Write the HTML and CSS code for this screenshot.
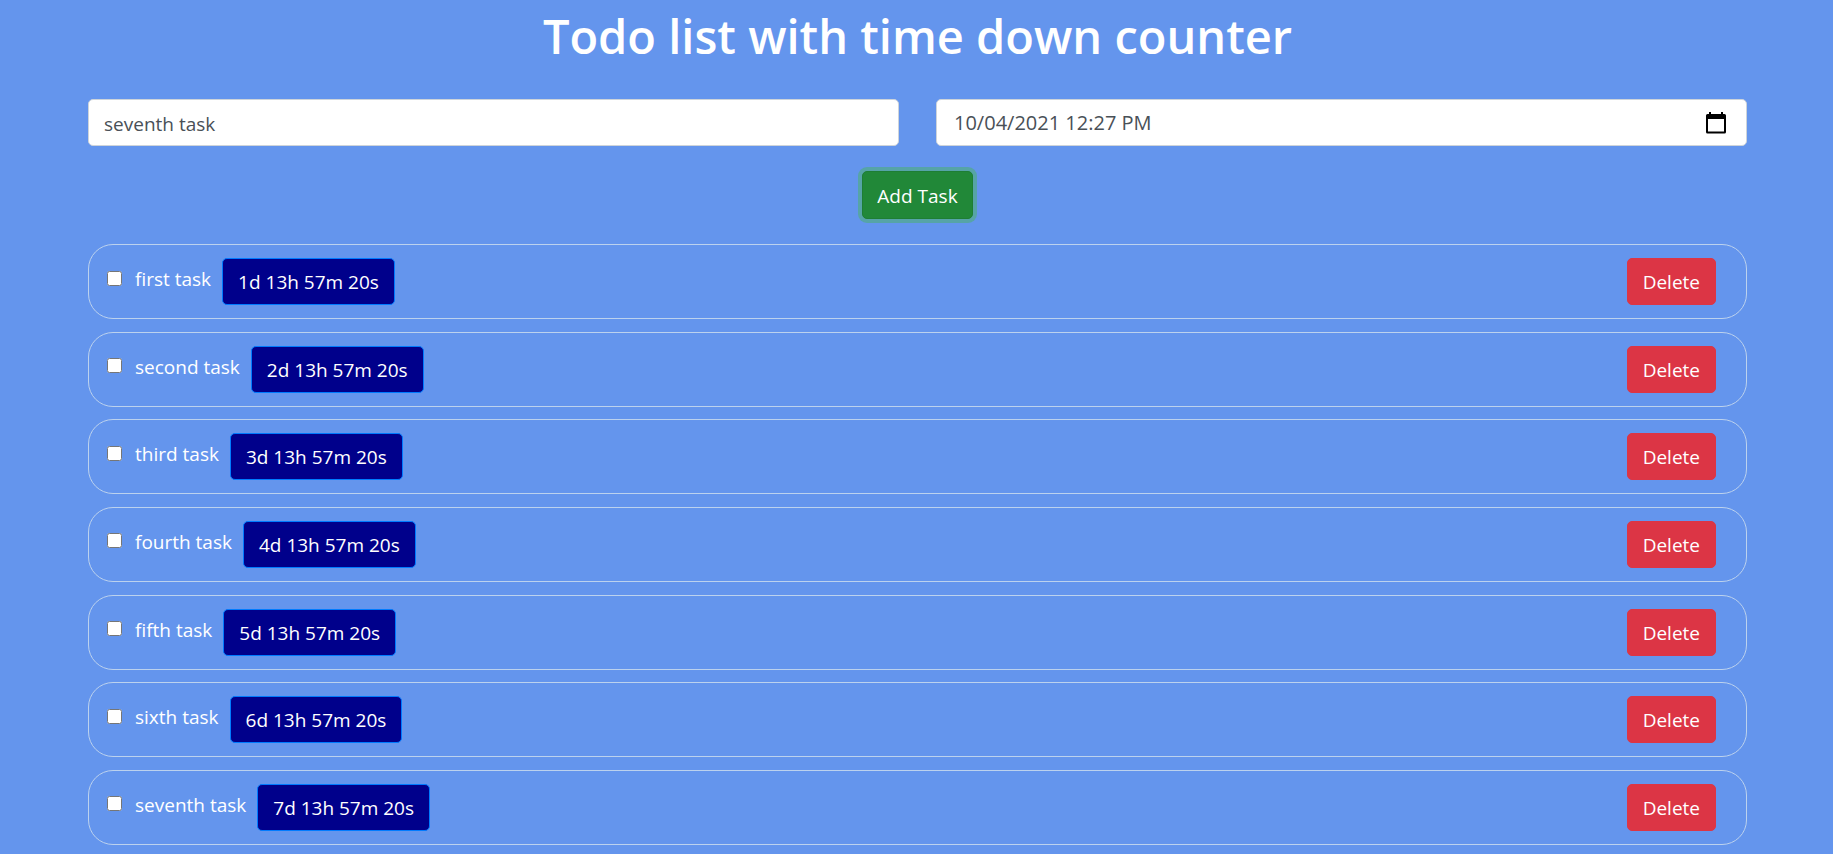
FILE: index.html
```html
<!DOCTYPE html>
<html lang="en">
<head>
<meta charset="utf-8">
<title>Todo list with time down counter</title>
<link rel="stylesheet" href="styles.css">
</head>
<body>
<main class="page">
  <h1 class="title">Todo list with time down counter</h1>
  <form class="task-form">
    <div class="fields">
      <input class="field" type="text" aria-label="Task" value="seventh task">
      <div class="field date-field">
        <input class="date-input" type="text" aria-label="Deadline" value="10/04/2021 12:27 PM">
        <button class="picker" type="button" aria-label="Open calendar">
          <svg width="20" height="22" viewBox="0 0 20 22" aria-hidden="true"><path fill-rule="evenodd" d="M3 0h2v2h10V0h2v2h1.500q1.500 0 1.500 1.500v16.500q0 1.500-1.500 1.500h-17q-1.500 0-1.500-1.500V3.500Q0 2 1.500 2H3zM2 7v12.500h16V7z"/></svg>
        </button>
      </div>
    </div>
    <button class="btn btn-add" type="button">Add Task</button>
  </form>
  <ul class="tasks">
    <li class="task"><label class="check"><input class="box" type="checkbox"><span>first task</span></label><button class="btn btn-time" type="button">1d 13h 57m 20s</button><button class="btn btn-delete" type="button">Delete</button></li>
    <li class="task"><label class="check"><input class="box" type="checkbox"><span>second task</span></label><button class="btn btn-time" type="button">2d 13h 57m 20s</button><button class="btn btn-delete" type="button">Delete</button></li>
    <li class="task"><label class="check"><input class="box" type="checkbox"><span>third task</span></label><button class="btn btn-time" type="button">3d 13h 57m 20s</button><button class="btn btn-delete" type="button">Delete</button></li>
    <li class="task"><label class="check"><input class="box" type="checkbox"><span>fourth task</span></label><button class="btn btn-time" type="button">4d 13h 57m 20s</button><button class="btn btn-delete" type="button">Delete</button></li>
    <li class="task"><label class="check"><input class="box" type="checkbox"><span>fifth task</span></label><button class="btn btn-time" type="button">5d 13h 57m 20s</button><button class="btn btn-delete" type="button">Delete</button></li>
    <li class="task"><label class="check"><input class="box" type="checkbox"><span>sixth task</span></label><button class="btn btn-time" type="button">6d 13h 57m 20s</button><button class="btn btn-delete" type="button">Delete</button></li>
    <li class="task"><label class="check"><input class="box" type="checkbox"><span>seventh task</span></label><button class="btn btn-time" type="button">7d 13h 57m 20s</button><button class="btn btn-delete" type="button">Delete</button></li>
  </ul>
</main>
</body>
</html>
```
FILE: styles.css
```css
* { box-sizing: border-box; }
body {
  margin: 0;
  background: cornflowerblue;
  color: #fff;
  font-family: "Segoe UI", "Open Sans", "Noto Sans", sans-serif;
  font-size: 19px;
  line-height: 29px;
}
.page {
  display: flex;
  flex-direction: column;
  min-height: 100vh;
  padding: 6px 86px 9px 88px;
}
.title {
  margin: 0 0 33px;
  font-size: 47px;
  line-height: 60px;
  font-weight: 600;
  text-align: center;
}
.task-form {
  display: flex;
  flex-direction: column;
  align-items: center;
  gap: 25px;
  margin-bottom: 25px;
}
.fields {
  display: grid;
  grid-template-columns: 1fr 1fr;
  gap: 37px;
  width: 100%;
}
.field {
  width: 100%;
  min-width: 0;
  height: 47px;
  padding: 9px 15px 7px;
  border: 1px solid #ced4da;
  border-radius: 5px;
  background: #fff;
  color: #495057;
  font: inherit;
}
.date-field {
  display: flex;
  align-items: center;
  padding: 0 20px 0 17px;
}
.date-input {
  flex: 1;
  min-width: 0;
  padding: 0;
  border: 0;
  outline: 0;
  background: none;
  color: inherit;
  font: inherit;
  font-size: 20px;
}
.picker {
  display: flex;
  padding: 0;
  border: 0;
  background: none;
}
.btn {
  height: 47px;
  padding: 2px 15px 0;
  border: 1px solid transparent;
  border-radius: 5px;
  color: #fff;
  font: inherit;
  white-space: nowrap;
}
.btn-add {
  height: 48px;
  padding: 2px 14px 0;
  background: #218838;
  border-color: #1e7e34;
  box-shadow: 0 0 0 4px rgba(72, 180, 97, 0.5);
}
.tasks {
  display: flex;
  flex: 1;
  flex-direction: column;
  justify-content: space-between;
  gap: 12px;
  margin: 0;
  padding: 0;
  list-style: none;
}
.task {
  display: flex;
  align-items: center;
  padding: 13px 30px 13px 18px;
  border: 1px solid #bcd2ee;
  border-radius: 25px;
}
.check {
  display: flex;
  align-items: center;
  gap: 13px;
  margin-right: 11px;
  padding-bottom: 4px;
}
.box {
  width: 15px;
  height: 15px;
  margin: 0 0 3px;
}
.btn-time {
  background: darkblue;
  border-color: #007bff;
}
.btn-delete {
  margin-left: auto;
  background: #dc3545;
  border-color: #dc3545;
}
```
